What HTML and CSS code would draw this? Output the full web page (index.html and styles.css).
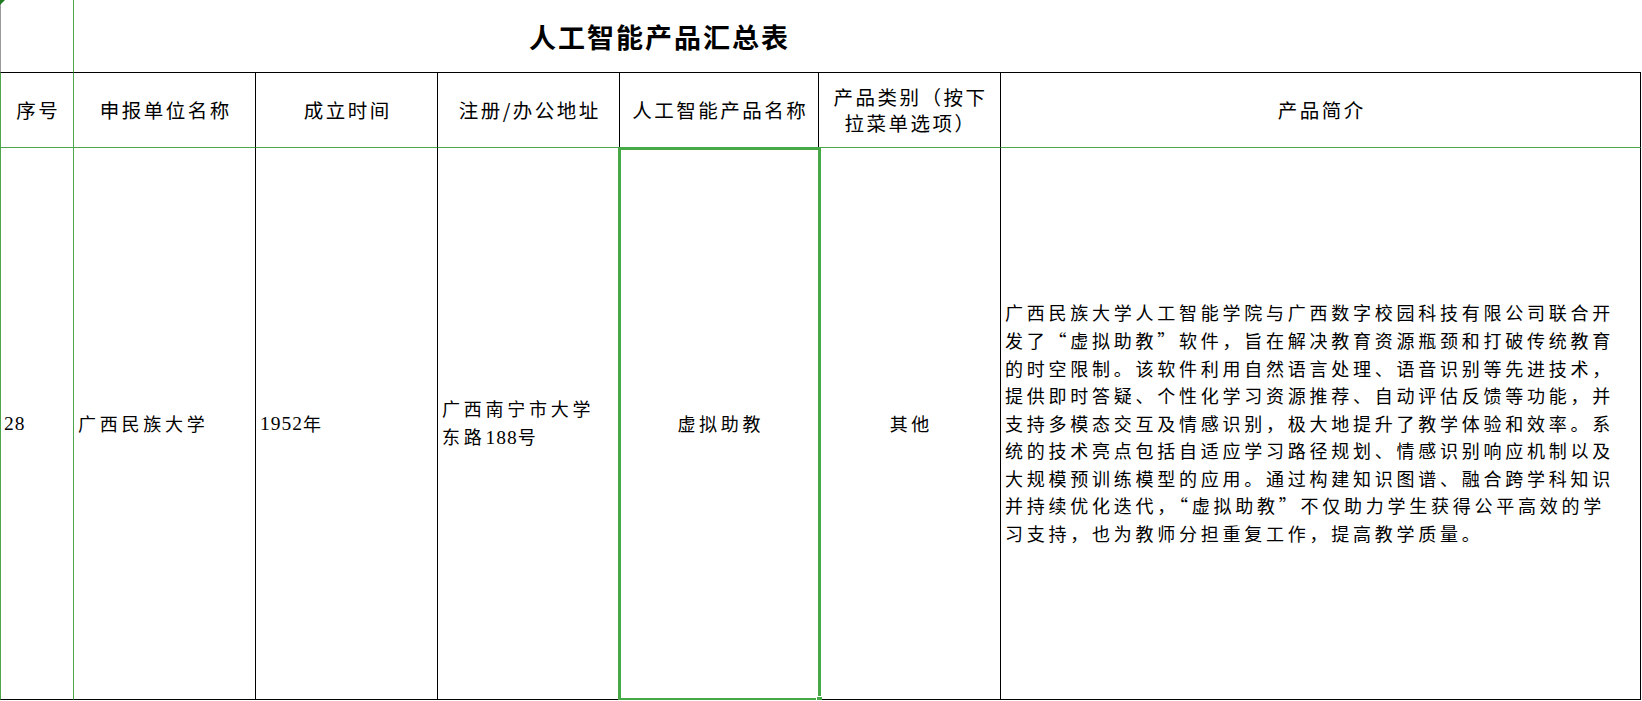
FILE: index.html
```html
<!DOCTYPE html>
<html lang="zh-CN">
<head>
<meta charset="utf-8">
<title>人工智能产品汇总表</title>
<link rel="stylesheet" href="styles.css">
</head>
<body>
<div class="sheet">
  <div class="cell corner"></div>
  <div class="cell title"><h1 class="title-text">人工智能产品汇总表</h1></div>

  <div class="cell head first">序号</div>
  <div class="cell head">申报单位名称</div>
  <div class="cell head">成立时间</div>
  <div class="cell head">注册/办公地址</div>
  <div class="cell head">人工智能产品名称</div>
  <div class="cell head narrow">产品类别（按下拉菜单选项）</div>
  <div class="cell head last">产品简介</div>

  <div class="cell data first"><span class="num">28</span></div>
  <div class="cell data">广西民族大学</div>
  <div class="cell data"><span class="num">1952</span><span>年</span></div>
  <div class="cell data addr">
    <div class="lines">
      <div class="line">广西南宁市大学</div>
      <div class="line"><span>东路</span><span class="num">188</span><span>号</span></div>
    </div>
  </div>
  <div class="cell data center selected">虚拟助教<span class="handle"></span></div>
  <div class="cell data center">其他</div>
  <div class="cell data last desc"><p class="desc-text">广西民族大学人工智能学院与广西数字校园科技有限公司联合开发了“虚拟助教”软件，旨在解决教育资源瓶颈和打破传统教育的时空限制。该软件利用自然语言处理、语音识别等先进技术，提供即时答疑、个性化学习资源推荐、自动评估反馈等功能，并支持多模态交互及情感识别，极大地提升了教学体验和效率。系统的技术亮点包括自适应学习路径规划、情感识别响应机制以及大规模预训练模型的应用。通过构建知识图谱、融合跨学科知识并持续优化迭代，“虚拟助教”不仅助力学生获得公平高效的学习支持，也为教师分担重复工作，提高教学质量。</p></div>
</div>
</body>
</html>
```

FILE: styles.css
```css
html, body {
  margin: 0;
  padding: 0;
  background: #ffffff;
}

body {
  font-family: "Noto Sans CJK SC", "Noto Sans", sans-serif;
  color: #000;
  overflow: hidden;
}

.sheet {
  display: grid;
  grid-template-columns: 74px 182px 182px 182px 199px 182px 640px;
  grid-template-rows: 73px 75px 552px;
  width: 1641px;
}

.cell {
  box-sizing: border-box;
  position: relative;
  display: flex;
  align-items: center;
  border-right: 1px solid #000;
  border-bottom: 1px solid #000;
  min-width: 0;
}

/* title row */
.corner {
  border-left: 1px solid #9a9a9a;
  border-right-color: #4ea64c;
}

.corner::before {
  content: "";
  position: absolute;
  top: 0;
  left: -1px;
  width: 0;
  height: 0;
  border-top: 5px solid #1f7a1f;
  border-right: 5px solid transparent;
}

.title {
  grid-column: 2 / span 6;
  border-right: none;
  padding-left: 455px;
}

.title-text {
  margin: 0;
  font-family: "Noto Sans CJK SC", sans-serif;
  font-weight: 700;
  font-size: 27px;
  letter-spacing: 2px;
  line-height: 1;
  white-space: nowrap;
}

/* header row */
.head {
  justify-content: center;
  text-align: center;
  border-bottom-color: #4ea64c;
  font-size: 19.5px;
  letter-spacing: 2.5px;
  line-height: 26.5px;
  padding-left: 2.5px;
}

.head.narrow {
  padding: 0 10px 0 12px;
}

.first {
  border-left: 1px solid #4ea64c;
  border-right-color: #4ea64c;
}

/* data row */
.data {
  font-size: 18px;
  letter-spacing: 3.75px;
  line-height: 27.6px;
  padding-left: 4px;
}

.data.first {
  padding-left: 3px;
}

.num {
  font-family: "Liberation Serif", serif;
  font-size: 19.5px;
  letter-spacing: 1px;
}

.addr {
  padding-right: 12px;
}

.lines {
  display: flex;
  flex-direction: column;
}

.line {
  white-space: nowrap;
}

.center {
  justify-content: center;
  text-align: center;
  padding-left: 3.75px;
}

.selected::after {
  content: "";
  position: absolute;
  left: -2px;
  top: -1px;
  right: -3px;
  bottom: -2px;
  border: 3px solid #46a846;
  z-index: 2;
  pointer-events: none;
}

.handle {
  position: absolute;
  right: -4px;
  bottom: -3px;
  width: 5px;
  height: 5px;
  background: #46a846;
  border-top: 1px solid #fff;
  border-left: 1px solid #fff;
  z-index: 3;
}

.desc {
  padding-left: 4px;
  padding-right: 14px;
}

.desc-text {
  margin: 0;
  width: 620px;
}
```
